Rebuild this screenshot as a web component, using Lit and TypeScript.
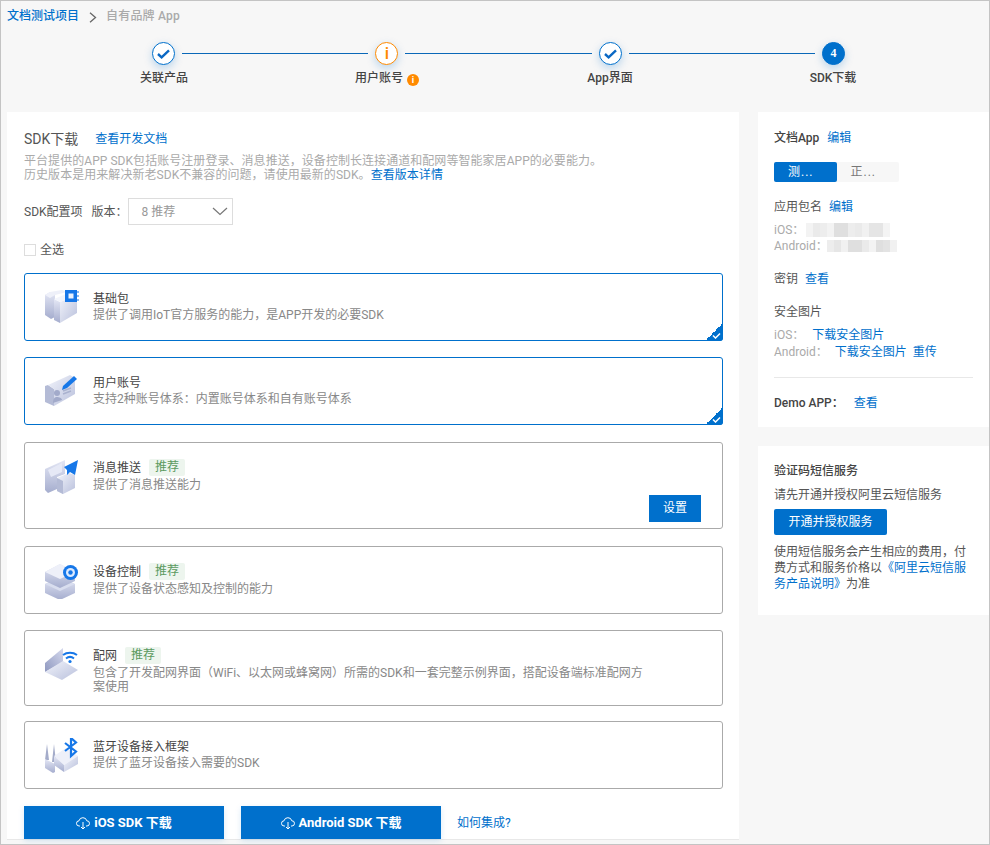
import { LitElement, css, html, svg } from 'lit';
import { customElement } from 'lit/decorators.js';

const defs = svg`
  <defs>
    <linearGradient id="f" x1="0" y1="0" x2="0" y2="1">
      <stop offset="0" stop-color="#e4e7f5"/><stop offset="1" stop-color="#a5adce"/>
    </linearGradient>
    <linearGradient id="s" x1="0" y1="0" x2="1" y2="1">
      <stop offset="0" stop-color="#f2f4fb"/><stop offset="1" stop-color="#b9c0dc"/>
    </linearGradient>
    <linearGradient id="d" x1="1" y1="0" x2="0" y2="1">
      <stop offset="0" stop-color="#d5d9ee"/><stop offset="1" stop-color="#8f98bf"/>
    </linearGradient>
  </defs>`;

const icons = {
  base: svg`
    <path d="M0 5l5-3 5 3v22l-4 2-6-4z" fill="url(#f)"/>
    <path d="M0 5l5-3 12-2 5 2-12 3-5 3z" fill="#eef0f9"/>
    <path d="M15 12l17-7v18L15 33z" fill="url(#s)"/>
    <path d="M9 9l6 3v21l-6-3z" fill="url(#f)"/>
    <path d="M9 9l17-7 6 3-17 7z" fill="#f3f5fc"/>
    <rect x="20" y="0" width="12" height="12" fill="#1677e8"/>
    <rect x="23.500" y="3.500" width="5" height="5" fill="#e9f2ff"/>
    <path d="M32 2h2M32 6h2M32 10h2" stroke="#1677e8"/>`,
  user: svg`
    <path d="M0 12l3-1 6 4v17l-9-4z" fill="#b4bbd6"/>
    <path d="M3 11L25 1l5 3v16L9 32V15z" fill="url(#s)"/>
    <circle cx="12" cy="19" r="3" fill="#a2aaca"/>
    <path d="M8 29c0-5 2-6 4-6s5 1 5 3z" fill="#a2aaca"/>
    <path d="M18 17l8-3M18 20l8-3" stroke="#aab2cf" stroke-width="1.500"/>
    <path d="M18 12L29 2l3 3-10 9-5 2z" fill="#1677e8"/>`,
  push: svg`
    <path d="M0 10L20 1v14l-8 3v12l-9 4-3-3z" fill="url(#f)"/>
    <path d="M3 11L17 4v9L6 18z" fill="#e6e9f6"/>
    <path d="M12 19l12-5 6 2v13l-12 6-6-3z" fill="url(#s)"/>
    <path d="M12 19l6 3v13l-6-3z" fill="#b4bbd6"/>
    <path d="M19 8L33 1l-3 15-5-3-3 3v-5z" fill="#1677e8"/>`,
  device: svg`
    <path d="M0 21l15-7 15 7v9l-15 7-15-7z" fill="url(#f)"/>
    <path d="M0 21l15 7 15-7-15-7z" fill="#d9deef"/>
    <path d="M0 9l15-8 15 8v9l-15 7-15-7z" fill="url(#f)"/>
    <path d="M0 9l15 7 15-7-15-8z" fill="#eef0f9"/>
    <circle cx="25.500" cy="9.500" r="7.500" fill="#1677e8"/>
    <circle cx="25.500" cy="9.500" r="4.500" fill="#dceaff"/>
    <circle cx="25.500" cy="9.500" r="2.200" fill="#1677e8"/>`,
  net: svg`
    <path d="M0 16L18 1v14L0 25z" fill="url(#d)"/>
    <path d="M0 25l18-11 15 9-16 10z" fill="url(#s)"/>
    <path d="M18 8c4-3 10-3 14 0M21 11.500c2.500-2 5.500-2 8 0" fill="none" stroke="#1677e8" stroke-width="2"/>
    <circle cx="25" cy="14.500" r="1.600" fill="#1677e8"/>`,
  ble: svg`
    <path d="M0 22L2 6l2 16zM7 24L9 6l2 18z" fill="#a4acca"/>
    <path d="M0 21l10 5v8l-2 1-8-5z" fill="url(#f)"/>
    <path d="M9 18l12-8 12 8-14 9z" fill="#eef0f9"/>
    <path d="M9 18l10 9v7l-10-7z" fill="url(#f)"/>
    <path d="M19 27l14-9v8l-14 8z" fill="url(#s)"/>
    <path d="M20 5l11 8.500-5 4.500V0l5 4.500-11 8.500" fill="none" stroke="#1677e8" stroke-width="2.200"/>`,
};

const items = [
  { icon: icons.base, name: '基础包', desc: '提供了调用IoT官方服务的能力，是APP开发的必要SDK', cls: 'on' },
  { icon: icons.user, name: '用户账号', desc: '支持2种账号体系：内置账号体系和自有账号体系', cls: 'on' },
  { icon: icons.push, name: '消息推送', desc: '提供了消息推送能力', cls: 'push tagged', setup: true },
  { icon: icons.device, name: '设备控制', desc: '提供了设备状态感知及控制的能力', cls: 'device tagged' },
  { icon: icons.net, name: '配网', desc: '包含了开发配网界面（WiFi、以太网或蜂窝网）所需的SDK和一套完整示例界面，搭配设备端标准配网方案使用', cls: 'net tagged' },
  { icon: icons.ble, name: '蓝牙设备接入框架', desc: '提供了蓝牙设备接入需要的SDK', cls: 'ble' },
];

const steps = ['关联产品', '用户账号', 'App界面', 'SDK下载'];

// blurred package names in the sidebar
const mosaicA = [.35, .6, .5, .35, .9, .9, .5, .6, .4, .75, .75, .3];
const mosaicB = [.5, .7, .4, .9, .9, .6, .35, .9, .8, .4];

const check = svg`<svg width="21" height="21" viewBox="0 0 21 21"><path d="M5 11l3.600 3.300 7.400-7" fill="none" stroke="#0a68c4" stroke-width="2.400"/></svg>`;
const cloud = svg`<svg width="14" height="14" viewBox="0 0 14 14"><path d="M4 10H3.200A2.600 2.600 0 0 1 3 4.800 4 4 0 0 1 10.800 4.800 2.600 2.600 0 0 1 11 10H10M7 6v7M5 11l2 2 2-2" fill="none" stroke="#fff"/></svg>`;

@customElement('app-root')
export class AppRoot extends LitElement {
  static styles = css`
    :host {
      display: block;
      box-sizing: border-box;
      width: 990px;
      height: 845px;
      overflow: hidden;
      background: #f7f7f7;
      border: 1px solid #c4c4c4;
      font: 12px/16px Roboto, "Noto Sans CJK SC", sans-serif;
      color: #555;
    }
    a {
      color: #0070cc;
    }
    .crumbs {
      display: flex;
      align-items: center;
      height: 16px;
      padding: 7px 0 0 6px;
      font-weight: 500;
    }
    .crumbs svg {
      margin: 3px 9px 0 10px;
    }
    .crumbs span {
      color: #aaa;
      letter-spacing: 0.2px;
    }
    .track {
      display: flex;
      align-items: center;
      height: 23px;
      margin-top: 18px;
      padding-left: 151px;
      width: 693px;
    }
    .dot {
      flex: none;
      box-sizing: border-box;
      width: 23px;
      height: 23px;
      border: 1px solid #0070cc;
      border-radius: 50%;
      background: #fff;
      box-shadow: 0 3px 8px rgba(0, 112, 204, 0.25);
    }
    .dot.warn {
      border-color: #ff8a00;
      color: #ff8a00;
      font: 500 17px/21px Roboto, sans-serif;
      text-align: center;
    }
    .dot.now {
      background: #0070cc;
      color: #fff;
      font: 700 12px/20px "Liberation Serif", serif;
      text-align: center;
    }
    .wire {
      flex: 1;
      height: 1px;
      margin: 0 7px;
      background: #0a68b8;
    }
    .labels {
      display: grid;
      grid-template-columns: repeat(4, 223px);
      margin: 5px 0 0 51.5px;
      font-weight: 500;
      color: #444;
      text-align: center;
    }
    .badge {
      display: inline-block;
      width: 12px;
      height: 12px;
      margin-left: 4px;
      border-radius: 50%;
      background: #ff8a00;
      color: #fff;
      font: 700 9px/12px Roboto, sans-serif;
      vertical-align: -1px;
    }
    .main {
      display: flex;
      align-items: flex-start;
      gap: 19px;
      margin: 26px 0 0 6px;
    }
    .left {
      flex: none;
      box-sizing: border-box;
      width: 732px;
      height: 728px;
      padding: 19px 16px 0 17px;
      background: #fff;
      border-bottom: 1px solid #e8e8e8;
    }
    .head {
      display: flex;
      gap: 17px;
      align-items: center;
    }
    .head b {
      font-size: 14px;
      font-weight: 400;
      color: #555;
    }
    .intro {
      margin-top: 7px;
      line-height: 14px;
      letter-spacing: 0.05px;
      color: #aaa;
    }
    .config {
      display: flex;
      align-items: center;
      gap: 9px;
      margin-top: 16px;
      height: 27px;
    }
    .select {
      display: flex;
      align-items: center;
      justify-content: space-between;
      box-sizing: border-box;
      width: 105px;
      height: 27px;
      margin-left: -9px;
      padding: 0 4px 0 13px;
      border: 1px solid #ddd;
      color: #999;
    }
    .all {
      display: flex;
      align-items: center;
      gap: 4px;
      height: 14px;
      margin-top: 18px;
    }
    .box {
      box-sizing: border-box;
      width: 12px;
      height: 12px;
      border: 1px solid #ddd;
    }
    .list {
      display: flex;
      flex-direction: column;
      gap: 16px;
      margin-top: 16px;
    }
    .item {
      position: relative;
      box-sizing: border-box;
      display: flex;
      gap: 14px;
      min-height: 68px;
      padding: 16px 21px 0 20px;
      border: 1px solid #aaa;
      border-radius: 3px;
    }
    .item.on {
      border-color: #0070cc;
    }
    .item.push {
      height: 87px;
      margin-top: 1px;
    }
    .item.device {
      margin-top: 1px;
    }
    .item.net {
      height: 76px;
    }
    .item.ble {
      margin-top: -1px;
    }
    .pic {
      flex: none;
      width: 34px;
      height: 36px;
    }
    .body {
      flex: 1;
      min-width: 0;
      color: #888;
      line-height: 14px;
    }
    .name {
      display: flex;
      align-items: center;
      min-height: 17px;
      line-height: 16px;
      color: #444;
    }
    .tag {
      width: 36px;
      height: 17px;
      margin-left: 8px;
      border-radius: 2px;
      background: #edf5ee;
      color: #5b9a5f;
      line-height: 17px;
      text-align: center;
    }
    .desc {
      max-width: 556px;
      margin-top: 1px;
    }
    .tagged .desc {
      margin-top: 2px;
    }
    .setup {
      display: block;
      width: 52px;
      height: 27px;
      margin: 3px 0 0 auto;
      background: #0070cc;
      color: #fff;
      line-height: 27px;
      text-align: center;
    }
    .corner {
      position: absolute;
      right: -1px;
      bottom: -1px;
      width: 18px;
      height: 18px;
      border-radius: 0 0 3px 0;
      background: linear-gradient(135deg, transparent 50%, #0070cc 50%);
    }
    .corner svg {
      position: absolute;
      right: 2px;
      bottom: 2px;
    }
    .actions {
      display: flex;
      align-items: center;
      margin-top: 17px;
    }
    .dl {
      display: flex;
      align-items: center;
      justify-content: center;
      gap: 4px;
      width: 200px;
      height: 33px;
      margin-right: 17px;
      background: #0070cc;
      color: #fff;
      font-size: 13px;
      font-weight: 700;
      box-shadow: 0 2px 6px rgba(0, 112, 204, 0.15);
    }
    .actions a {
      margin-left: -1px;
    }
    .side {
      flex: 1;
      display: flex;
      flex-direction: column;
      gap: 19px;
    }
    .panel {
      box-sizing: border-box;
      padding: 17px 16px 0;
      background: #fff;
    }
    .panel.app {
      height: 315px;
      padding-top: 18px;
    }
    .panel.sms {
      height: 169px;
    }
    .row {
      display: flex;
      gap: 7px;
      color: #555;
    }
    .edit {
      margin-left: 1px;
    }
    .strong {
      font-weight: 500;
      color: #444;
    }
    .tabs {
      display: flex;
      width: 125px;
      height: 20px;
      margin-top: 16px;
      line-height: 20px;
      letter-spacing: 1px;
      background: #f7f7f7;
      border-radius: 2px;
    }
    .tabs div {
      flex: 1;
      padding-left: 14px;
      border-radius: 2px;
      color: #777;
    }
    .tabs .active {
      background: #0070cc;
      color: #fff;
    }
    .pkg {
      margin-top: 17px;
    }
    .gap {
      margin-top: 17px;
    }
    .mute {
      display: flex;
      align-items: center;
      color: #aaa;
    }
    .first {
      margin-top: 7px;
    }
    .next {
      margin-top: 1px;
    }
    .mosaic {
      display: flex;
      height: 14px;
      margin-left: 2px;
    }
    .mosaic.b {
      height: 12px;
      margin-left: -1px;
    }
    .mosaic i {
      width: 7px;
      background: #dcdcdc;
    }
    .link-a {
      margin-left: 8px;
    }
    .link-b {
      margin-left: 7px;
    }
    .link-c {
      margin-left: 6px;
    }
    .rule {
      height: 1px;
      margin: 17px 0;
      background: #e8e8e8;
    }
    .demo {
      margin-left: 3px;
    }
    .hint {
      margin-top: 8px;
    }
    .cta {
      width: 113px;
      height: 26px;
      margin: 6px 0 9px;
      border-radius: 2px;
      background: #0070cc;
      color: #fff;
      line-height: 26px;
      text-align: center;
    }
  `;

  renderItem(it: (typeof items)[number]) {
    return html`
      <div class="item ${it.cls}">
        <svg class="pic" viewBox="0 0 34 36">${it.icon}</svg>
        <div class="body">
          <div class="name">${it.name}${it.cls.includes('tagged') ? html`<span class="tag">推荐</span>` : ''}</div>
          <div class="desc">${it.desc}</div>
          ${it.setup ? html`<div class="setup">设置</div>` : ''}
        </div>
        ${it.cls === 'on'
          ? html`<div class="corner"><svg width="9" height="7" viewBox="0 0 9 7"><path d="M1 3.500l2.500 2.500 4.500-4.500" fill="none" stroke="#fff" stroke-width="1.500"/></svg></div>`
          : ''}
      </div>
    `;
  }

  render() {
    return html`
      <svg width="0" height="0" style="position:absolute">${defs}</svg>
      <div class="crumbs">
        <a>文档测试项目</a>
        <svg width="8" height="11" viewBox="0 0 8 11"><path d="M1 .8l5.500 4.700L1 10.200" fill="none" stroke="#666" stroke-width="1.300"/></svg>
        <span>自有品牌 App</span>
      </div>
      <div class="track">
        <div class="dot">${check}</div>
        <div class="wire"></div>
        <div class="dot warn">i</div>
        <div class="wire"></div>
        <div class="dot">${check}</div>
        <div class="wire"></div>
        <div class="dot now">4</div>
      </div>
      <div class="labels">
        ${steps.map((s, i) => html`<div>${s}${i === 1 ? html`<span class="badge">i</span>` : ''}</div>`)}
      </div>
      <div class="main">
        <div class="left">
          <div class="head"><b>SDK下载</b><a>查看开发文档</a></div>
          <div class="intro">
            平台提供的APP SDK包括账号注册登录、消息推送，设备控制长连接通道和配网等智能家居APP的必要能力。<br />
            历史版本是用来解决新老SDK不兼容的问题，请使用最新的SDK。<a>查看版本详情</a>
          </div>
          <div class="config">
            <span>SDK配置项</span>
            <span>版本：</span>
            <div class="select">
              8 推荐
              <svg width="16" height="9" viewBox="0 0 16 9"><path d="M1 1l7 6.500L15 1" fill="none" stroke="#777" stroke-width="1.200"/></svg>
            </div>
          </div>
          <div class="all"><div class="box"></div>全选</div>
          <div class="list">${items.map((it) => this.renderItem(it))}</div>
          <div class="actions">
            <div class="dl">${cloud}iOS SDK 下载</div>
            <div class="dl">${cloud}Android SDK 下载</div>
            <a>如何集成?</a>
          </div>
        </div>
        <div class="side">
          <div class="panel app">
            <div class="row"><span class="strong">文档App</span><a class="edit">编辑</a></div>
            <div class="tabs"><div class="active">测...</div><div>正...</div></div>
            <div class="row pkg"><span>应用包名</span><a>编辑</a></div>
            <div class="mute first">iOS：<span class="mosaic">${mosaicA.map((v) => html`<i style="opacity:${v}"></i>`)}</span></div>
            <div class="mute">Android：<span class="mosaic b">${mosaicB.map((v) => html`<i style="opacity:${v}"></i>`)}</span></div>
            <div class="row gap"><span>密钥</span><a>查看</a></div>
            <div class="row gap"><span>安全图片</span></div>
            <div class="mute first">iOS：<a class="link-a">下载安全图片</a></div>
            <div class="mute next">Android：<a class="link-b">下载安全图片</a><a class="link-c">重传</a></div>
            <div class="rule"></div>
            <div class="row"><span class="strong">Demo APP：</span><a class="demo">查看</a></div>
          </div>
          <div class="panel sms">
            <div class="strong">验证码短信服务</div>
            <div class="hint">请先开通并授权阿里云短信服务</div>
            <div class="cta">开通并授权服务</div>
            <div>使用短信服务会产生相应的费用，付费方式和服务价格以<a>《阿里云短信服务产品说明》</a>为准</div>
          </div>
        </div>
      </div>
    `;
  }
}
